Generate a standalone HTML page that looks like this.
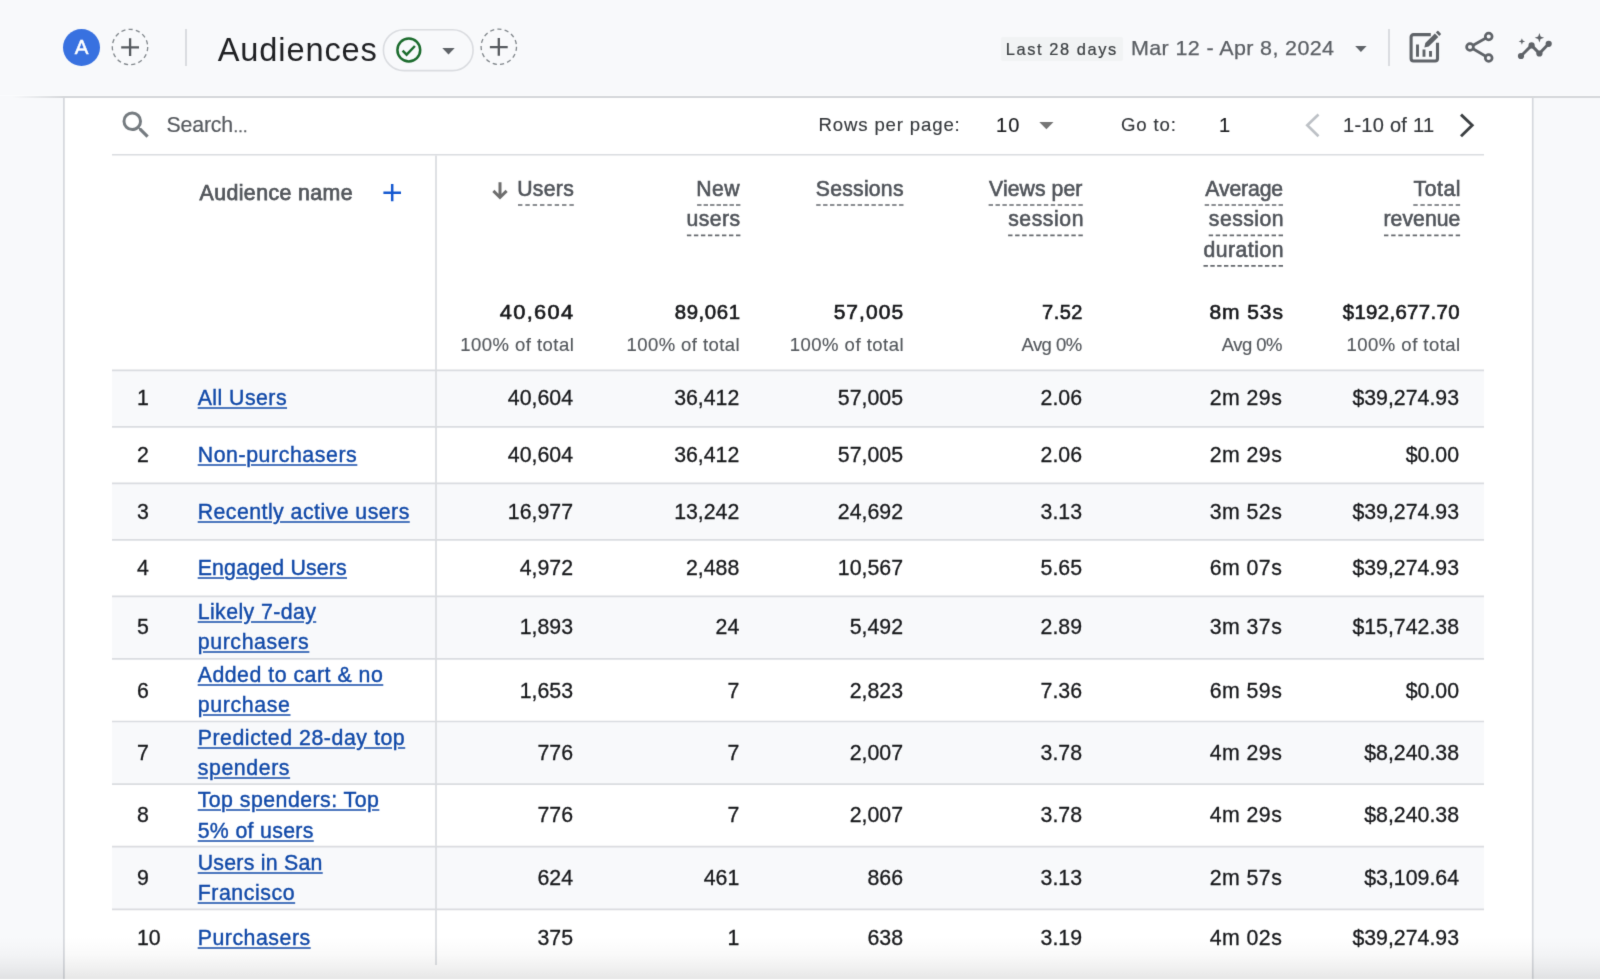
<!DOCTYPE html>
<html lang="en">
<head>
<meta charset="utf-8">
<title>Audiences</title>
<style>
*{box-sizing:border-box;margin:0;padding:0}
html,body{width:1600px;height:980px;overflow:hidden}
body{background:#f8f9fb;font-family:"Liberation Sans",Arial,sans-serif;color:#202124;position:relative}
#root{background:#f8f9fb;position:absolute;left:0;top:0;width:1600px;height:980px;overflow:hidden;filter:url(#soft)}
.abs{position:absolute;white-space:nowrap}
a.rowlink{color:inherit;text-decoration:none}
#hdr{position:absolute;left:0;top:0;width:1600px;height:96px;background:#f8f9fb}
#hdrlite{position:absolute;left:0;top:95px;width:1600px;height:1px;background:#fbfcfd}
#hdrline{position:absolute;left:0;top:96px;width:1600px;height:2px;background:linear-gradient(to right,rgba(213,215,218,0) 12px,rgba(213,215,218,1) 64px)}
.avatar{left:63px;top:28.5px;width:37px;height:37px;border-radius:50%;background:#3871e0;color:#fff;font-size:20.5px;line-height:35px;text-align:center;-webkit-text-stroke:.5px #fff}
.vdiv{background:#dadce0;width:1.5px}
.title{font-size:32.6px;line-height:40px;color:#1f2023}
.chip{left:1000.5px;top:37px;width:122.5px;height:23.5px;background:#f1f3f4;border-radius:2px}
.chiptxt{font-size:16.4px;line-height:20px;color:#3c4043;-webkit-text-stroke:.22px #3c4043}
.date{font-size:20.3px;line-height:24px;color:#5a5e63;-webkit-text-stroke:.25px #5a5e63;transform:scaleX(1.06);transform-origin:0 50%}
#card{position:absolute;left:64px;top:97px;width:1469px;height:883px;background:#fff}
.srch{font-size:21.3px;line-height:26px;color:#565a5f;-webkit-text-stroke:.2px #565a5f}
.ell{font-size:15px;-webkit-text-stroke:.5px #5f6368;letter-spacing:0}
.tb{font-size:18.6px;line-height:24px;color:#35383c;-webkit-text-stroke:.15px #35383c}
.tb20{font-size:20px;line-height:24px;color:#1b1c1f;-webkit-text-stroke:.2px #1b1c1f}
.c3{color:#35383c;-webkit-text-stroke:.2px #35383c}
.thl{font-size:21.3px;line-height:30.5px;color:#53575c;-webkit-text-stroke:.75px #53575c}
.th{font-size:21.2px;line-height:30px;color:#50545a;-webkit-text-stroke:.6px #50545a}
.tot{font-size:20px;line-height:24px;color:#17181b;-webkit-text-stroke:.6px #17181b;transform-origin:100% 50%}
.sub{font-size:18.5px;line-height:22px;color:#54585d;-webkit-text-stroke:.15px #54585d}
.num{font-size:21.3px;line-height:26px;color:#17181b;-webkit-text-stroke:.3px #17181b}
.lnk{font-size:21.3px;line-height:30.6px;color:#1149a8;text-decoration:underline;text-decoration-thickness:1.6px;text-decoration-color:rgba(17,73,168,.75);text-underline-offset:1.5px;-webkit-text-stroke:.4px #1149a8}
#fade{position:absolute;left:0;top:936px;width:1600px;height:43px;background:linear-gradient(to bottom,rgba(0,0,0,0) 0,rgba(0,0,0,.008) 8px,rgba(0,0,0,.025) 19px,rgba(0,0,0,.055) 31px,rgba(0,0,0,.095) 42.5px)}
#bot{position:absolute;left:0;top:979px;width:1600px;height:1px;background:#fff}
</style>
</head>
<body>
<svg width="0" height="0" style="position:absolute"><defs><filter id="soft" x="0" y="0" width="1" height="1" color-interpolation-filters="sRGB"><feConvolveMatrix order="3" kernelMatrix="0.0113 0.0838 0.0113 0.0838 0.6193 0.0838 0.0113 0.0838 0.0113" edgeMode="duplicate"/></filter></defs></svg>
<div id="root">
<div id="hdr"></div>
<div id="card"></div>
<div id="hdrlite"></div>
<div id="hdrline"></div>
<div class="abs avatar">A</div>
<svg class="abs" style="left:110.300px;top:27.250px" width="40" height="40" viewBox="0 0 40 40"><circle cx="20" cy="20" r="17.7" fill="none" stroke="#80868b" stroke-width="1.3" stroke-dasharray="4.2 3.2"/><path d="M11.2 20.3H29M20.1 11.3V29" stroke="#55595e" stroke-width="2.3" fill="none"/></svg>
<div class="abs vdiv" style="left:185px;top:28.5px;height:37px"></div>
<div id="title" class="abs title" style="left:217.70px;top:30.30px;letter-spacing:0.88px;">Audiences</div>
<svg class="abs" style="left:380px;top:26px" width="98" height="48" viewBox="0 0 98 48"><rect x="3.4" y="3.7" width="89.7" height="40.900" rx="20.450" fill="#f8f9fb" stroke="#dadce0" stroke-width="1.600"/></svg>
<svg class="abs" style="left:394px;top:36px" width="30" height="30" viewBox="0 0 30 30"><circle cx="14.8" cy="14" r="11.4" fill="none" stroke="#1c6c2e" stroke-width="2.5"/><path d="M8.6 14.600l4 4 8.300-8.600" fill="none" stroke="#1c6c2e" stroke-width="2.5"/></svg>
<svg class="abs" style="left:442px;top:47.5px" width="13" height="7" viewBox="0 0 13 7"><path d="M0.3 0h12.4L6.5 6.5z" fill="#5f6368"/></svg>
<svg class="abs" style="left:479px;top:27px" width="40" height="40" viewBox="0 0 40 40"><circle cx="19.8" cy="19.8" r="17.7" fill="none" stroke="#80868b" stroke-width="1.3" stroke-dasharray="4.2 3.2"/><path d="M10.9 20.1H28.7M19.8 11.1V28.8" stroke="#55595e" stroke-width="2.3" fill="none"/></svg>
<div class="abs chip"></div>
<div id="chiptxt" class="abs chiptxt" style="left:1005.84px;top:39.00px;letter-spacing:1.59px;">Last 28 days</div>
<div id="date" class="abs date" style="left:1131.31px;top:35.60px;letter-spacing:0.35px;">Mar 12 - Apr 8, 2024</div>
<svg class="abs" style="left:1355px;top:46px" width="12" height="7" viewBox="0 0 12 7"><path d="M0.2 0h11.4L5.9 6z" fill="#5f6368"/></svg>
<div class="abs vdiv" style="left:1388px;top:28.5px;height:37px"></div>
<svg class="abs" style="left:1404px;top:26px" width="44" height="44" viewBox="0 0 44 44"><g fill="none" stroke="#5f6368" stroke-width="3.1"><path d="M26.8 8.600H9.500a2.400 2.400 0 0 0-2.400 2.400v21.600a2.400 2.400 0 0 0 2.400 2.400h21.600a2.400 2.400 0 0 0 2.400-2.400V16.800"/><path d="M13.500 18.500v12.200M20 23.500v7.200M26.500 25v5.700" stroke-width="2.900"/></g><g fill="#5f6368" stroke="#f8f9fb" stroke-width="1.200" paint-order="stroke"><path d="M20.400 21.500L21.300 17.100L30.900 7.500L34.300 10.900L24.700 20.500Z"/></g><path d="M31.900 6.500L33.300 5.100a.8.800 0 0 1 1.100 0L36.700 7.400a.8.800 0 0 1 0 1.100L35.300 9.900Z" fill="#5f6368"/></svg>
<svg class="abs" style="left:1460px;top:26px" width="44" height="44" viewBox="0 0 44 44"><g fill="none" stroke="#5f6368" stroke-width="2.7"><path d="M10 21l18.7-10.5M10 21l18.7 11"/><circle cx="28.7" cy="10.5" r="3.4" fill="#f8f9fb"/><circle cx="10" cy="21" r="3.4" fill="#f8f9fb"/><circle cx="28.7" cy="32" r="3.4" fill="#f8f9fb"/></g></svg>
<svg class="abs" style="left:1512px;top:26px" width="44" height="44" viewBox="0 0 44 44"><path d="M9 30l10.6-10.6 7.8 8.1 9.3-9.7" fill="none" stroke="#5f6368" stroke-width="3" stroke-linejoin="round"/><g fill="#5f6368"><circle cx="9" cy="30" r="3.1"/><circle cx="19.6" cy="19.4" r="3.1"/><circle cx="27.4" cy="27.5" r="3.1"/><circle cx="36.7" cy="17.8" r="3.1"/><path d="M27.4 7l1.2 3.5 3.5 1.2-3.5 1.2-1.2 3.5-1.2-3.5-3.5-1.2 3.5-1.2z"/><path d="M9.9 12.2l.85 2.4 2.4.85-2.4.85-.85 2.4-.85-2.4-2.4-.85 2.4-.85z"/></g></svg>
<svg class="abs" style="left:118px;top:107px" width="36" height="36" viewBox="0 0 24 24"><path fill="#757b80" d="M15.5 14h-.79l-.28-.27A6.471 6.471 0 0 0 16 9.5 6.5 6.5 0 1 0 9.5 16c1.61 0 3.09-.59 4.23-1.57l.27.28v.79l5 4.99L20.49 19l-4.99-5zm-6 0C7.01 14 5 11.99 5 9.500S7.01 5 9.500 5 14 7.010 14 9.500 11.990 14 9.500 14z"/></svg>
<div id="search" class="abs srch" style="left:166.45px;top:112.00px;letter-spacing:-0.14px;">Search<span class="ell">…</span></div>
<div id="rpp" class="abs tb" style="left:818.59px;top:113.00px;letter-spacing:0.84px;">Rows per page:</div>
<div id="n10" class="abs tb20" style="left:995.92px;top:112.50px;letter-spacing:1.28px;">10</div>
<svg class="abs" style="left:1038.5px;top:122px" width="15" height="8" viewBox="0 0 15 8"><path d="M0.3 0h14.2L7.4 7.2z" fill="#757575"/></svg>
<div id="goto" class="abs tb" style="left:1120.88px;top:113.00px;letter-spacing:0.87px;">Go to:</div>
<div id="n1" class="abs tb20" style="left:1219.00px;top:112.50px;letter-spacing:0.00px;">1</div>
<svg class="abs" style="left:1302px;top:110px" width="22" height="30" viewBox="0 0 22 30"><path d="M16.5 4.6L5.3 15.3l11.2 10.9" fill="none" stroke="#bdc1c6" stroke-width="2.7"/></svg>
<div id="range" class="abs tb20 c3" style="left:1343.00px;top:112.50px;letter-spacing:0.27px;">1-10 of 11</div>
<svg class="abs" style="left:1455px;top:110px" width="22" height="30" viewBox="0 0 22 30"><path d="M6 4.6l11.2 10.7L6 26.200" fill="none" stroke="#3c4043" stroke-width="2.900"/></svg>
<svg class="abs" style="left:0;top:0" width="1600" height="980" viewBox="0 0 1600 980"><rect x="112" y="370.3" width="1372" height="56.5" fill="#f8f9fb"/><rect x="112" y="483.3" width="1372" height="56.5" fill="#f8f9fb"/><rect x="112" y="596.3" width="1372" height="62.6" fill="#f8f9fb"/><rect x="112" y="721.5" width="1372" height="62.6" fill="#f8f9fb"/><rect x="112" y="846.7" width="1372" height="62.6" fill="#f8f9fb"/><g stroke="#dadce0" stroke-width="1.7" fill="none"><path d="M112 154.75H1484"/><path d="M112 370.3H1484"/><path d="M112 426.8H1484"/><path d="M112 483.3H1484"/><path d="M112 539.8H1484"/><path d="M112 596.3H1484"/><path d="M112 658.9H1484"/><path d="M112 721.5H1484"/><path d="M112 784.1H1484"/><path d="M112 846.7H1484"/><path d="M112 909.3H1484"/><path d="M436 155.500V965"/><path d="M63.9 98V980" stroke="#d6d8dd"/><path d="M1532.750 98V980" stroke="#d6d8dd"/></g></svg>
<div id="audname" class="abs thl" style="left:199.61px;top:177.50px;letter-spacing:0.41px;">Audience name</div>
<svg class="abs" style="left:382px;top:183px" width="20" height="20" viewBox="0 0 20 20"><path d="M1.4 9.7H19M10.2 1.100V18.300" stroke="#1458d0" stroke-width="2.500" fill="none"/></svg>
<svg class="abs" style="left:490px;top:180px" width="20" height="22" viewBox="0 0 20 22"><path d="M10 2.200V16.800M3.400 10.900L10 17.500l6.600-6.600" stroke="#6e6e6e" stroke-width="3" fill="none"/></svg>
<div class="colhdr">
<div id="h0_0" class="abs th" style="right:1025.97px;top:173.70px;letter-spacing:0.30px;">Users</div>
</div>
<div class="colhdr">
<div id="h1_0" class="abs th" style="right:859.85px;top:173.70px;letter-spacing:0.51px;">New</div>
 
<div id="h1_1" class="abs th" style="right:859.35px;top:204.10px;letter-spacing:0.46px;">users</div>
</div>
<div class="colhdr">
<div id="h2_0" class="abs th" style="right:696.28px;top:173.70px;letter-spacing:0.24px;">Sessions</div>
</div>
<div class="colhdr">
<div id="h3_0" class="abs th" style="right:517.64px;top:173.70px;letter-spacing:0.07px;">Views per</div>
 
<div id="h3_1" class="abs th" style="right:515.95px;top:204.10px;letter-spacing:0.58px;">session</div>
</div>
<div class="colhdr">
<div id="h4_0" class="abs th" style="right:317.06px;top:173.70px;letter-spacing:-0.13px;">Average</div>
 
<div id="h4_1" class="abs th" style="right:315.96px;top:204.10px;letter-spacing:0.48px;">session</div>
 
<div id="h4_2" class="abs th" style="right:315.98px;top:234.50px;letter-spacing:0.50px;">duration</div>
</div>
<div class="colhdr">
<div id="h5_0" class="abs th" style="right:138.93px;top:173.70px;letter-spacing:0.55px;">Total</div>
 
<div id="h5_1" class="abs th" style="right:139.63px;top:204.10px;letter-spacing:0.04px;">revenue</div>
</div>
<svg id="dashes" class="abs" style="left:0;top:0" width="1600" height="300" viewBox="0 0 1600 300"><g stroke="#64686d" stroke-width="1.7" stroke-dasharray="4.6 2.6" fill="none"><path stroke-dasharray="4.4 2.943" d="M518.0 205.0H574.1"/><path stroke-dasharray="4.4 2.083" d="M697.1 205.0H740.7"/><path stroke-dasharray="4.4 2.614" d="M686.9 235.4H740.7"/><path stroke-dasharray="4.4 2.508" d="M816.2 205.0H903.8"/><path stroke-dasharray="4.4 2.508" d="M988.6 205.0H1083.1"/><path stroke-dasharray="4.4 2.630" d="M1008.1 235.4H1083.1"/><path stroke-dasharray="4.4 2.318" d="M1204.7 205.0H1283.3"/><path stroke-dasharray="4.4 2.590" d="M1208.7 235.4H1283.3"/><path stroke-dasharray="4.4 2.427" d="M1203.5 265.8H1283.3"/><path stroke-dasharray="4.4 2.667" d="M1413.3 205.0H1460.4"/><path stroke-dasharray="4.4 2.770" d="M1384.0 235.4H1460.4"/></g></svg>
<div id="t0" class="abs tot" style="right:1025.82px;top:299.50px;letter-spacing:1.20px;transform:scaleX(1.09)">40,604</div>
<div id="s0" class="abs sub" style="right:1025.77px;top:333.50px;letter-spacing:0.46px;">100% of total</div>
<div id="t1" class="abs tot" style="right:859.70px;top:299.50px;letter-spacing:0.58px;transform:scaleX(1.02)">89,061</div>
<div id="s1" class="abs sub" style="right:860.00px;top:333.50px;letter-spacing:0.42px;">100% of total</div>
<div id="t2" class="abs tot" style="right:696.20px;top:299.50px;letter-spacing:1.00px;transform:scaleX(1.05)">57,005</div>
<div id="s2" class="abs sub" style="right:695.93px;top:333.50px;letter-spacing:0.49px;">100% of total</div>
<div id="t3" class="abs tot" style="right:517.14px;top:299.50px;letter-spacing:0.46px;transform:scaleX(1.0)">7.52</div>
<div id="s3" class="abs sub" style="right:518.34px;top:333.50px;letter-spacing:-0.53px;">Avg 0%</div>
<div id="t4" class="abs tot" style="right:316.37px;top:299.50px;letter-spacing:0.88px;transform:scaleX(1.05)">8m 53s</div>
<div id="s4" class="abs sub" style="right:317.99px;top:333.50px;letter-spacing:-0.54px;">Avg 0%</div>
<div id="t5" class="abs tot" style="right:140.57px;top:299.50px;letter-spacing:0.33px;transform:scaleX(1.02)">$192,677.70</div>
<div id="s5" class="abs sub" style="right:139.34px;top:333.50px;letter-spacing:0.47px;">100% of total</div>
<div id="i0" class="abs num" style="left:137.00px;top:384.62px;letter-spacing:0.00px;">1</div>
<a class="rowlink" href="#">
<div id="l0_0" class="abs lnk" style="left:197.70px;top:382.52px;letter-spacing:0.46px;">All Users</div>
</a>
<div id="n0_0" class="abs num" style="right:1027.00px;top:384.62px;letter-spacing:0.00px;">40,604</div>
<div id="n0_1" class="abs num" style="right:860.70px;top:384.62px;letter-spacing:0.00px;">36,412</div>
<div id="n0_2" class="abs num" style="right:697.00px;top:384.62px;letter-spacing:0.00px;">57,005</div>
<div id="n0_3" class="abs num" style="right:518.00px;top:384.62px;letter-spacing:0.00px;">2.06</div>
<div id="n0_4" class="abs num" style="right:317.75px;top:384.62px;letter-spacing:0.45px;">2m 29s</div>
<div id="n0_5" class="abs num" style="right:141.00px;top:384.62px;letter-spacing:0.00px;">$39,274.93</div>
<div id="i1" class="abs num" style="left:137.00px;top:441.62px;letter-spacing:0.00px;">2</div>
<a class="rowlink" href="#">
<div id="l1_0" class="abs lnk" style="left:197.70px;top:439.52px;letter-spacing:0.58px;">Non-purchasers</div>
</a>
<div id="n1_0" class="abs num" style="right:1027.00px;top:441.62px;letter-spacing:0.00px;">40,604</div>
<div id="n1_1" class="abs num" style="right:860.70px;top:441.62px;letter-spacing:0.00px;">36,412</div>
<div id="n1_2" class="abs num" style="right:697.00px;top:441.62px;letter-spacing:0.00px;">57,005</div>
<div id="n1_3" class="abs num" style="right:518.00px;top:441.62px;letter-spacing:0.00px;">2.06</div>
<div id="n1_4" class="abs num" style="right:317.75px;top:441.62px;letter-spacing:0.45px;">2m 29s</div>
<div id="n1_5" class="abs num" style="right:141.00px;top:441.62px;letter-spacing:0.00px;">$0.00</div>
<div id="i2" class="abs num" style="left:137.00px;top:498.62px;letter-spacing:0.00px;">3</div>
<a class="rowlink" href="#">
<div id="l2_0" class="abs lnk" style="left:197.70px;top:496.52px;letter-spacing:0.46px;">Recently active users</div>
</a>
<div id="n2_0" class="abs num" style="right:1027.00px;top:498.62px;letter-spacing:0.00px;">16,977</div>
<div id="n2_1" class="abs num" style="right:860.70px;top:498.62px;letter-spacing:0.00px;">13,242</div>
<div id="n2_2" class="abs num" style="right:697.00px;top:498.62px;letter-spacing:0.00px;">24,692</div>
<div id="n2_3" class="abs num" style="right:518.00px;top:498.62px;letter-spacing:0.00px;">3.13</div>
<div id="n2_4" class="abs num" style="right:317.75px;top:498.62px;letter-spacing:0.45px;">3m 52s</div>
<div id="n2_5" class="abs num" style="right:141.00px;top:498.62px;letter-spacing:0.00px;">$39,274.93</div>
<div id="i3" class="abs num" style="left:137.00px;top:554.62px;letter-spacing:0.00px;">4</div>
<a class="rowlink" href="#">
<div id="l3_0" class="abs lnk" style="left:197.70px;top:552.52px;letter-spacing:0.19px;">Engaged Users</div>
</a>
<div id="n3_0" class="abs num" style="right:1027.00px;top:554.62px;letter-spacing:0.00px;">4,972</div>
<div id="n3_1" class="abs num" style="right:860.70px;top:554.62px;letter-spacing:0.00px;">2,488</div>
<div id="n3_2" class="abs num" style="right:697.00px;top:554.62px;letter-spacing:0.00px;">10,567</div>
<div id="n3_3" class="abs num" style="right:518.00px;top:554.62px;letter-spacing:0.00px;">5.65</div>
<div id="n3_4" class="abs num" style="right:317.75px;top:554.62px;letter-spacing:0.45px;">6m 07s</div>
<div id="n3_5" class="abs num" style="right:141.00px;top:554.62px;letter-spacing:0.00px;">$39,274.93</div>
<div id="i4" class="abs num" style="left:137.00px;top:613.62px;letter-spacing:0.00px;">5</div>
<a class="rowlink" href="#">
<div id="l4_0" class="abs lnk" style="left:197.70px;top:596.52px;letter-spacing:0.41px;">Likely 7-day</div>
 
<div id="l4_1" class="abs lnk" style="left:197.70px;top:626.52px;letter-spacing:0.63px;">purchasers</div>
</a>
<div id="n4_0" class="abs num" style="right:1027.00px;top:613.62px;letter-spacing:0.00px;">1,893</div>
<div id="n4_1" class="abs num" style="right:860.70px;top:613.62px;letter-spacing:0.00px;">24</div>
<div id="n4_2" class="abs num" style="right:697.00px;top:613.62px;letter-spacing:0.00px;">5,492</div>
<div id="n4_3" class="abs num" style="right:518.00px;top:613.62px;letter-spacing:0.00px;">2.89</div>
<div id="n4_4" class="abs num" style="right:317.75px;top:613.62px;letter-spacing:0.45px;">3m 37s</div>
<div id="n4_5" class="abs num" style="right:141.00px;top:613.62px;letter-spacing:0.00px;">$15,742.38</div>
<div id="i5" class="abs num" style="left:137.00px;top:677.62px;letter-spacing:0.00px;">6</div>
<a class="rowlink" href="#">
<div id="l5_0" class="abs lnk" style="left:197.70px;top:659.52px;letter-spacing:0.51px;">Added to cart &amp; no</div>
 
<div id="l5_1" class="abs lnk" style="left:197.70px;top:689.52px;letter-spacing:0.65px;">purchase</div>
</a>
<div id="n5_0" class="abs num" style="right:1027.00px;top:677.62px;letter-spacing:0.00px;">1,653</div>
<div id="n5_1" class="abs num" style="right:860.70px;top:677.62px;letter-spacing:0.00px;">7</div>
<div id="n5_2" class="abs num" style="right:697.00px;top:677.62px;letter-spacing:0.00px;">2,823</div>
<div id="n5_3" class="abs num" style="right:518.00px;top:677.62px;letter-spacing:0.00px;">7.36</div>
<div id="n5_4" class="abs num" style="right:317.75px;top:677.62px;letter-spacing:0.45px;">6m 59s</div>
<div id="n5_5" class="abs num" style="right:141.00px;top:677.62px;letter-spacing:0.00px;">$0.00</div>
<div id="i6" class="abs num" style="left:137.00px;top:739.62px;letter-spacing:0.00px;">7</div>
<a class="rowlink" href="#">
<div id="l6_0" class="abs lnk" style="left:197.70px;top:722.52px;letter-spacing:0.55px;">Predicted 28-day top</div>
 
<div id="l6_1" class="abs lnk" style="left:197.70px;top:752.52px;letter-spacing:0.60px;">spenders</div>
</a>
<div id="n6_0" class="abs num" style="right:1027.00px;top:739.62px;letter-spacing:0.00px;">776</div>
<div id="n6_1" class="abs num" style="right:860.70px;top:739.62px;letter-spacing:0.00px;">7</div>
<div id="n6_2" class="abs num" style="right:697.00px;top:739.62px;letter-spacing:0.00px;">2,007</div>
<div id="n6_3" class="abs num" style="right:518.00px;top:739.62px;letter-spacing:0.00px;">3.78</div>
<div id="n6_4" class="abs num" style="right:317.75px;top:739.62px;letter-spacing:0.45px;">4m 29s</div>
<div id="n6_5" class="abs num" style="right:141.00px;top:739.62px;letter-spacing:0.00px;">$8,240.38</div>
<div id="i7" class="abs num" style="left:137.00px;top:801.62px;letter-spacing:0.00px;">8</div>
<a class="rowlink" href="#">
<div id="l7_0" class="abs lnk" style="left:197.70px;top:784.52px;letter-spacing:0.47px;">Top spenders: Top</div>
 
<div id="l7_1" class="abs lnk" style="left:197.70px;top:815.52px;letter-spacing:0.33px;">5% of users</div>
</a>
<div id="n7_0" class="abs num" style="right:1027.00px;top:801.62px;letter-spacing:0.00px;">776</div>
<div id="n7_1" class="abs num" style="right:860.70px;top:801.62px;letter-spacing:0.00px;">7</div>
<div id="n7_2" class="abs num" style="right:697.00px;top:801.62px;letter-spacing:0.00px;">2,007</div>
<div id="n7_3" class="abs num" style="right:518.00px;top:801.62px;letter-spacing:0.00px;">3.78</div>
<div id="n7_4" class="abs num" style="right:317.75px;top:801.62px;letter-spacing:0.45px;">4m 29s</div>
<div id="n7_5" class="abs num" style="right:141.00px;top:801.62px;letter-spacing:0.00px;">$8,240.38</div>
<div id="i8" class="abs num" style="left:137.00px;top:864.62px;letter-spacing:0.00px;">9</div>
<a class="rowlink" href="#">
<div id="l8_0" class="abs lnk" style="left:197.70px;top:847.52px;letter-spacing:0.26px;">Users in San</div>
 
<div id="l8_1" class="abs lnk" style="left:197.70px;top:877.52px;letter-spacing:0.57px;">Francisco</div>
</a>
<div id="n8_0" class="abs num" style="right:1027.00px;top:864.62px;letter-spacing:0.00px;">624</div>
<div id="n8_1" class="abs num" style="right:860.70px;top:864.62px;letter-spacing:0.00px;">461</div>
<div id="n8_2" class="abs num" style="right:697.00px;top:864.62px;letter-spacing:0.00px;">866</div>
<div id="n8_3" class="abs num" style="right:518.00px;top:864.62px;letter-spacing:0.00px;">3.13</div>
<div id="n8_4" class="abs num" style="right:317.75px;top:864.62px;letter-spacing:0.45px;">2m 57s</div>
<div id="n8_5" class="abs num" style="right:141.00px;top:864.62px;letter-spacing:0.00px;">$3,109.64</div>
<div id="i9" class="abs num" style="left:137.00px;top:924.62px;letter-spacing:0.00px;">10</div>
<a class="rowlink" href="#">
<div id="l9_0" class="abs lnk" style="left:197.70px;top:922.52px;letter-spacing:0.53px;">Purchasers</div>
</a>
<div id="n9_0" class="abs num" style="right:1027.00px;top:924.62px;letter-spacing:0.00px;">375</div>
<div id="n9_1" class="abs num" style="right:860.70px;top:924.62px;letter-spacing:0.00px;">1</div>
<div id="n9_2" class="abs num" style="right:697.00px;top:924.62px;letter-spacing:0.00px;">638</div>
<div id="n9_3" class="abs num" style="right:518.00px;top:924.62px;letter-spacing:0.00px;">3.19</div>
<div id="n9_4" class="abs num" style="right:317.75px;top:924.62px;letter-spacing:0.45px;">4m 02s</div>
<div id="n9_5" class="abs num" style="right:141.00px;top:924.62px;letter-spacing:0.00px;">$39,274.93</div>
<div id="fade"></div>
<div id="bot"></div>
</div>
</body>
</html>
